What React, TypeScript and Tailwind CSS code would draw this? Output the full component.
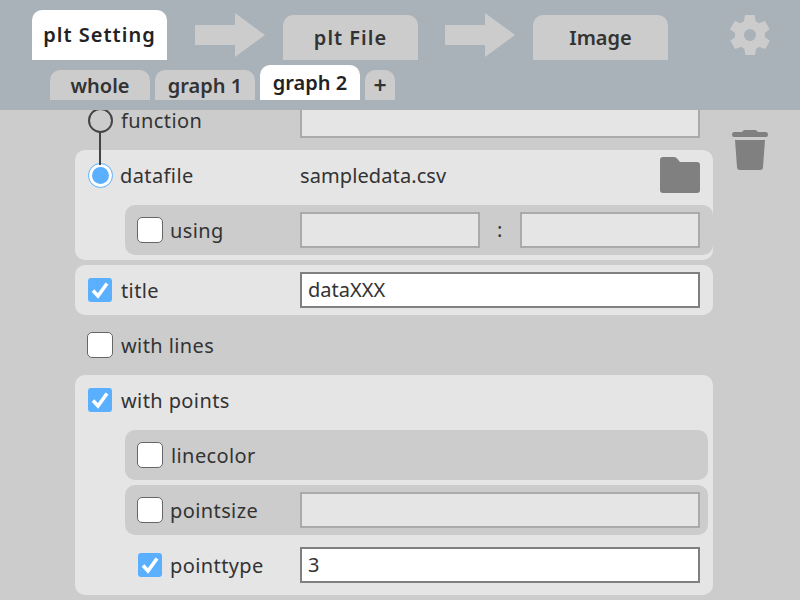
import React from 'react';

const Check = ({ checked }: { checked?: boolean }) => (
  <div className="w-[50px] -mr-[5px] flex justify-center shrink-0">
    {checked ? (
      <div className="w-[24px] h-[24px] my-px rounded-[3px] bg-[#5ab0ff] flex items-center justify-center">
        <svg width="24" height="24" viewBox="0 0 24 24">
          <path d="M5 12.500 L10 18 L19 5.500" fill="none" stroke="white" strokeWidth="3.600" />
        </svg>
      </div>
    ) : (
      <div className="w-[26px] h-[26px] rounded-[5px] bg-white border-[1.5px] border-[#666]" />
    )}
  </div>
);

const Radio = ({ on }: { on?: boolean }) => (
  <div className="w-[50px] -mr-[5px] flex justify-center shrink-0">
    {on ? (
      <div className="w-[25px] h-[25px] rounded-full bg-white border-[1.5px] border-[#5ab0ff] flex items-center justify-center">
        <div className="w-[17px] h-[17px] rounded-full bg-[#5ab0ff]" />
      </div>
    ) : (
      <div className="w-[25px] h-[25px] rounded-full border-2 border-[#444]" />
    )}
  </div>
);

const Input = ({ value, active, className = 'w-[400px]' }: { value?: string; active?: boolean; className?: string }) => (
  <div
    className={`h-[36px] px-[6px] flex items-center tracking-normal shrink-0 ${
      active ? 'bg-white border-2 border-[#808080]' : 'bg-[#e5e5e5] border-2 border-[#aaa]'
    } ${className}`}
  >
    {value}
  </div>
);

const Arrow = () => (
  <svg className="self-start mt-[13px] shrink-0" width="70" height="44" viewBox="0 0 70 44">
    <path d="M0 12 H40 V0 L70 22 L40 44 V32 H0 Z" fill="#ccc" />
  </svg>
);

const Tab = ({ label, active, track = 'tracking-[1px]' }: { label: string; active?: boolean; track?: string }) => (
  <div
    className={`w-[135px] rounded-t-[10px] flex items-center justify-center font-semibold shrink-0 ${track} ${
      active ? 'h-[50px] bg-white text-[#222]' : 'h-[45px] bg-[#ccc] text-[#333] pt-[1px]'
    }`}
  >
    {label}
  </div>
);

const SubTab = ({ label, active, w = 'w-[100px]', size = '' }: { label: string; active?: boolean; w?: string; size?: string }) => (
  <div
    className={`rounded-t-[10px] flex items-center justify-center font-semibold tracking-normal pt-[1px] ${w} ${size} ${
      active ? 'h-[35px] bg-white text-[#222]' : 'h-[30px] bg-[#ccc] text-[#333]'
    }`}
  >
    {label}
  </div>
);

const Row = ({ children }: { children: React.ReactNode }) => (
  <div className="h-[50px] flex items-center">{children}</div>
);

const Sub = ({ children, w = 'w-[588px]' }: { children: React.ReactNode; w?: string }) => (
  <div className={`h-[50px] ml-[50px] flex items-center bg-[#ccc] rounded-[10px] ${w}`}>{children}</div>
);

const Panel = ({ children }: { children: React.ReactNode }) => (
  <div className="bg-[#e5e5e5] rounded-[10px] flex flex-col gap-[5px]">{children}</div>
);

const Label = ({ text, sub, flush }: { text: string; sub?: boolean; flush?: boolean }) => (
  <span className={`shrink-0 pt-[2px] ${sub ? 'w-[130px]' : 'w-[180px]'}`}>
    <span className={flush ? '' : 'pl-[1px]'}>{text}</span>
  </span>
);

export default function App() {
  return (
    <div className="w-[800px] h-[600px] overflow-hidden bg-[#ccc] text-[#333] text-[20px] tracking-[0.4px] font-['Noto_Sans',sans-serif] flex flex-col">
      <div className="h-[110px] bg-[#a9b1b9] shrink-0 relative z-10">
        <div className="flex items-end pl-[32px] h-[60px]">
          <Tab label="plt Setting" active />
          <div className="w-[28px] shrink-0" />
          <Arrow />
          <div className="w-[18px] shrink-0" />
          <Tab label="plt File" />
          <div className="w-[27px] shrink-0" />
          <Arrow />
          <div className="w-[18px] shrink-0" />
          <Tab label="Image" track="tracking-normal" />
          <svg className="ml-[58px] self-start mt-[11px] shrink-0" width="48" height="48" viewBox="0 0 24 24" fill="#ccc" fillRule="evenodd">
            <path d="M19.4 13c0-.3.1-.7.1-1s0-.7-.1-1l2.1-1.6c.2-.2.2-.4.1-.6l-2-3.5c-.1-.2-.4-.3-.6-.2l-2.5 1c-.5-.4-1.1-.7-1.7-1l-.4-2.6c0-.3-.2-.5-.5-.5h-4c-.3 0-.5.2-.5.4l-.4 2.7c-.6.2-1.2.6-1.7 1l-2.5-1c-.2-.1-.5 0-.6.2l-2 3.5c-.1.2-.1.5.1.6L4.6 11c0 .3-.1.7-.1 1s0 .7.1 1l-2.1 1.6c-.2.2-.2.4-.1.6l2 3.5c.1.2.4.3.6.2l2.5-1c.5.4 1.1.7 1.7 1l.4 2.6c0 .3.2.5.5.5h4c.3 0 .5-.2.5-.4l.4-2.7c.6-.2 1.2-.6 1.7-1l2.5 1c.2.1.5 0 .6-.2l2-3.5c.1-.2.1-.5-.1-.6L19.4 13zM12 15a3 3 0 1 1 0-6 3 3 0 0 1 0 6z" />
          </svg>
        </div>
        <div className="flex items-end gap-[5px] pl-[50px] h-[40px]">
          <SubTab label="whole" />
          <SubTab label="graph 1" />
          <SubTab label="graph 2" active />
          <SubTab label="+" w="w-[30px]" size="text-[23px]" />
        </div>
      </div>

      <div className="flex pl-[75px] -mt-[15px] relative">
        <div className="w-[638px] shrink-0 flex flex-col gap-[5px] relative">
          {/* line between the two radios */}
          <div className="absolute left-[24px] top-[37px] w-[2px] h-[33px] bg-[#444] z-10" />

          <Row>
            <Radio />
            <Label text="function" />
            <Input />
          </Row>

          <Panel>
            <Row>
              <Radio on />
              <Label text="datafile" flush />
              <span className="flex-1 pt-[2px] tracking-[0.1px]">sampledata.csv</span>
              <svg className="mr-[13px]" width="40" height="36" viewBox="0 0 40 36" fill="#808080">
                <path d="M3 0 H14 Q16 0 17.500 2 L20 5 H37 Q40 5 40 8 V33 Q40 36 37 36 H3 Q0 36 0 33 V3 Q0 0 3 0 Z" />
              </svg>
            </Row>
            <Sub>
              <Check />
              <Label text="using" sub flush />
              <Input className="w-[180px]" />
              <span className="w-[40px] text-center">:</span>
              <Input className="w-[180px]" />
            </Sub>
            <div className="h-0" />
          </Panel>

          <Panel>
            <Row>
              <Check checked />
              <Label text="title" />
              <Input value="dataXXX" active />
            </Row>
          </Panel>

          <Row>
            <Check />
            <Label text="with lines" />
          </Row>

          <Panel>
            <Row>
              <Check checked />
              <Label text="with points" />
            </Row>
            <Sub w="w-[583px]">
              <Check />
              <Label text="linecolor" sub />
            </Sub>
            <Sub w="w-[583px]">
              <Check />
              <Label text="pointsize" sub flush />
              <Input />
            </Sub>
            <div className="h-[50px] ml-[50px] flex items-center">
              <Check checked />
              <Label text="pointtype" sub flush />
              <Input value="3" active />
            </div>
            <div className="h-0" />
          </Panel>
        </div>

        <div className="ml-[19px] mt-[35px] shrink-0">
          <svg width="36" height="40" viewBox="0 0 36 40" fill="#808080">
            <path d="M13 0 H23 Q25 0 26 2 H34 Q36 2 36 4.500 Q36 7 34 7 H2 Q0 7 0 4.500 Q0 2 2 2 H10 Q11 0 13 0 Z" />
            <path d="M3 10 H33 L31 37 Q31 40 28 40 H8 Q5 40 5 37 Z" />
          </svg>
        </div>
      </div>
    </div>
  );
}
